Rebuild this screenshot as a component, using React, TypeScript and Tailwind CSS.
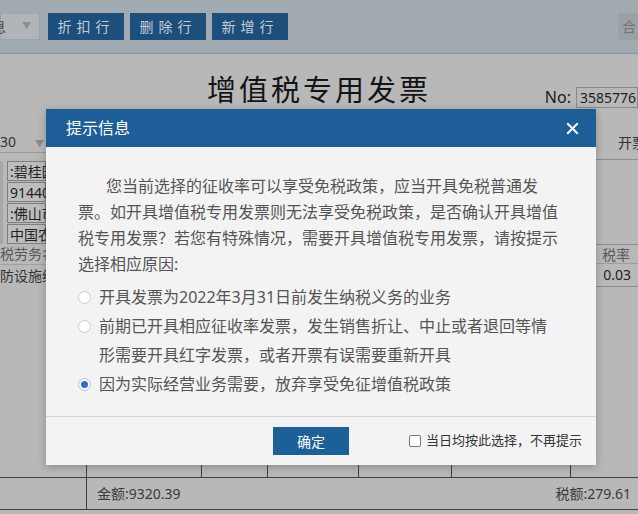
import { X } from "lucide-react";

const font = "font-['Noto_Sans','Noto_Sans_CJK_SC',sans-serif]";

function ToolbarButton({ label }: { label: string }) {
  return (
    <button className="flex h-[27px] w-[76px] items-center justify-center bg-[#1c4f7c] text-[14px] tracking-[5px] text-[#c3ccd5]">
      {label}
    </button>
  );
}

function Radio({ checked }: { checked?: boolean }) {
  return (
    <span
      className={
        checked
          ? "mt-[8px] flex size-[13px] shrink-0 items-center justify-center rounded-full border border-[#a9c4e6] bg-white"
          : "mt-[8px] size-[13px] shrink-0 rounded-full border border-[#c9c9c9] bg-white"
      }
    >
      {checked && <span className="size-[7px] rounded-full bg-[#2e6fcb]" />}
    </span>
  );
}

const reasons = [
  "开具发票为2022年3月31日前发生纳税义务的业务",
  "前期已开具相应征收率发票，发生销售折让、中止或者退回等情形需要开具红字发票，或者开票有误需要重新开具",
  "因为实际经营业务需要，放弃享受免征增值税政策",
];

export default function App() {
  return (
    <div className={`relative h-[514px] w-[638px] overflow-hidden bg-[#b8b8b8] ${font}`}>
      {/* Toolbar */}
      <div className="flex h-[54px] items-center border-b border-[#8d959c] bg-[#a2aab1] pb-[1px]">
        <div className="flex h-[27px] w-[40px] items-center justify-between border border-[#9da3a8] bg-[#b1b5b9] pr-[8px] text-[14px] text-[#444]">
          <span className="-ml-[9px]">息</span>
          <span className="text-[9px] text-[#8c8f92]">▼</span>
        </div>
        <div className="ml-[8px] flex gap-[6px]">
          <ToolbarButton label="折扣行" />
          <ToolbarButton label="删除行" />
          <ToolbarButton label="新增行" />
        </div>
        <div className="ml-auto flex h-[27px] w-[20px] items-center overflow-hidden bg-[#9ca1a6] pl-[4px] text-[14px] text-[#727476]">
          合
        </div>
      </div>

      {/* Title row */}
      <div className="relative flex h-[56px] justify-center pt-[18px]">
        <h1 className="text-[29px] leading-[36px] tracking-[3px] text-[#141414]">增值税专用发票</h1>
        <div className="absolute right-0 top-[31px] flex items-center gap-[5px]">
          <span className="text-[16px] text-[#1a1a1a]">No:</span>
          <span className="flex h-[21px] w-[62px] items-center border border-[#8a8a8a] pl-[3px] text-[14px] text-[#222]">
            3585776
          </span>
        </div>
      </div>

      {/* Form area */}
      <div className="flex h-[134px]">
        <div className="w-[46px] overflow-hidden pt-[20px]">
          <div className="flex h-[23px] items-center justify-between border-b border-[#9a9a9a] pr-[2px] text-[14px] text-[#333]">
            <span>30</span>
            <span className="mt-[6px] text-[9px] text-[#8a8a8a]">▼</span>
          </div>
          <div className="mt-[8px] flex flex-col gap-[1px] border-l-[3px] border-[#a8a8a8] pl-[4px]">
            {[":碧桂园", "914406", ":佛山市", "中国农业"].map((t) => (
              <div
                key={t}
                className="flex h-[20px] items-center whitespace-nowrap border border-[#7e7e7e] bg-[#bebebe] pl-[2px] text-[14px] text-[#222]"
              >
                {t}
              </div>
            ))}
          </div>
        </div>
        <div className="flex-1" />
        <div className="w-[42px] overflow-hidden pt-[22px]">
          <div className="h-[28px] whitespace-nowrap border-b border-[#8c8c8c] pl-[22px] text-[14px] text-[#333]">开票</div>
        </div>
      </div>

      {/* Table header + first row */}
      <div className="flex h-[42px]">
        <div className="w-[46px] overflow-hidden">
          <div className="h-[20px] whitespace-nowrap text-[14px] leading-[20px] text-[#5a5a5a]">税劳务名称</div>
          <div className="h-[22px] whitespace-nowrap border-t border-[#a0a0a0] text-[14px] leading-[22px] text-[#333]">防设施维修</div>
        </div>
        <div className="flex-1" />
        <div className="w-[42px] border-t border-[#8c8c8c]">
          <div className="h-[19px] border-b border-[#9c9c9c] pl-[6px] text-[14px] leading-[19px] text-[#5a5a5a]">税率</div>
          <div className="h-[23px] border-b border-[#8c8c8c] pr-[7px] text-right text-[14px] leading-[22px] text-[#222]">0.03</div>
        </div>
      </div>

      {/* Item rows (column lines) */}
      <div className="flex h-[191px]">
        {[87, 115, 66, 91, 93, 119].map((w) => (
          <div key={w} style={{ width: w }} className="border-r border-[#3f3f3f]" />
        ))}
      </div>

      {/* Summary row */}
      <div className="flex h-[33px] border-y border-[#3f3f3f] text-[14px] text-[#3a3a3a]">
        <div className="w-[87px] border-r border-[#3f3f3f]" />
        <div className="flex flex-1 items-center justify-between pl-[10px] pr-[7px]">
          <span>金额:9320.39</span>
          <span>税额:279.61</span>
        </div>
      </div>

      {/* Dialog */}
      <div className="absolute left-[46px] top-[109px] flex h-[356px] w-[550px] flex-col bg-[#f3f3f3] shadow-[0_2px_8px_rgba(0,0,0,0.25)]">
        <div className="flex h-[38px] items-center justify-between bg-[#1d5e99] pl-[20px] pr-[14px]">
          <span className="text-[16px] text-white">提示信息</span>
          <X className="size-[19px] text-white" strokeWidth={2.4} />
        </div>

        <div className="flex-1 pl-[32px] pt-[26px] text-[16px] text-[#555]">
          <p className="w-[490px] indent-[28px] leading-[26px]">
            您当前选择的征收率可以享受免税政策，应当开具免税普通发票。如开具增值税专用发票则无法享受免税政策，是否确认开具增值税专用发票？若您有特殊情况，需要开具增值税专用发票，请按提示选择相应原因:
          </p>
          <div className="mt-[6px] flex flex-col">
            {reasons.map((r, i) => (
              <label key={r} className="flex gap-[8px]">
                <Radio checked={i === 2} />
                <span className="w-[452px] leading-[29px]">{r}</span>
              </label>
            ))}
          </div>
        </div>

        <div className="flex h-[49px] items-center border-t border-[#d6d6d6]">
          <button className="ml-[227px] flex h-[28px] w-[76px] items-center justify-center bg-[#1b6099] text-[14px] text-white">
            确定
          </button>
          <label className="ml-[60px] flex items-center gap-[5px] text-[13px] text-[#333]">
            <span className="size-[12px] rounded-[2px] border border-[#777] bg-white" />
            当日均按此选择，不再提示
          </label>
        </div>
      </div>
    </div>
  );
}
